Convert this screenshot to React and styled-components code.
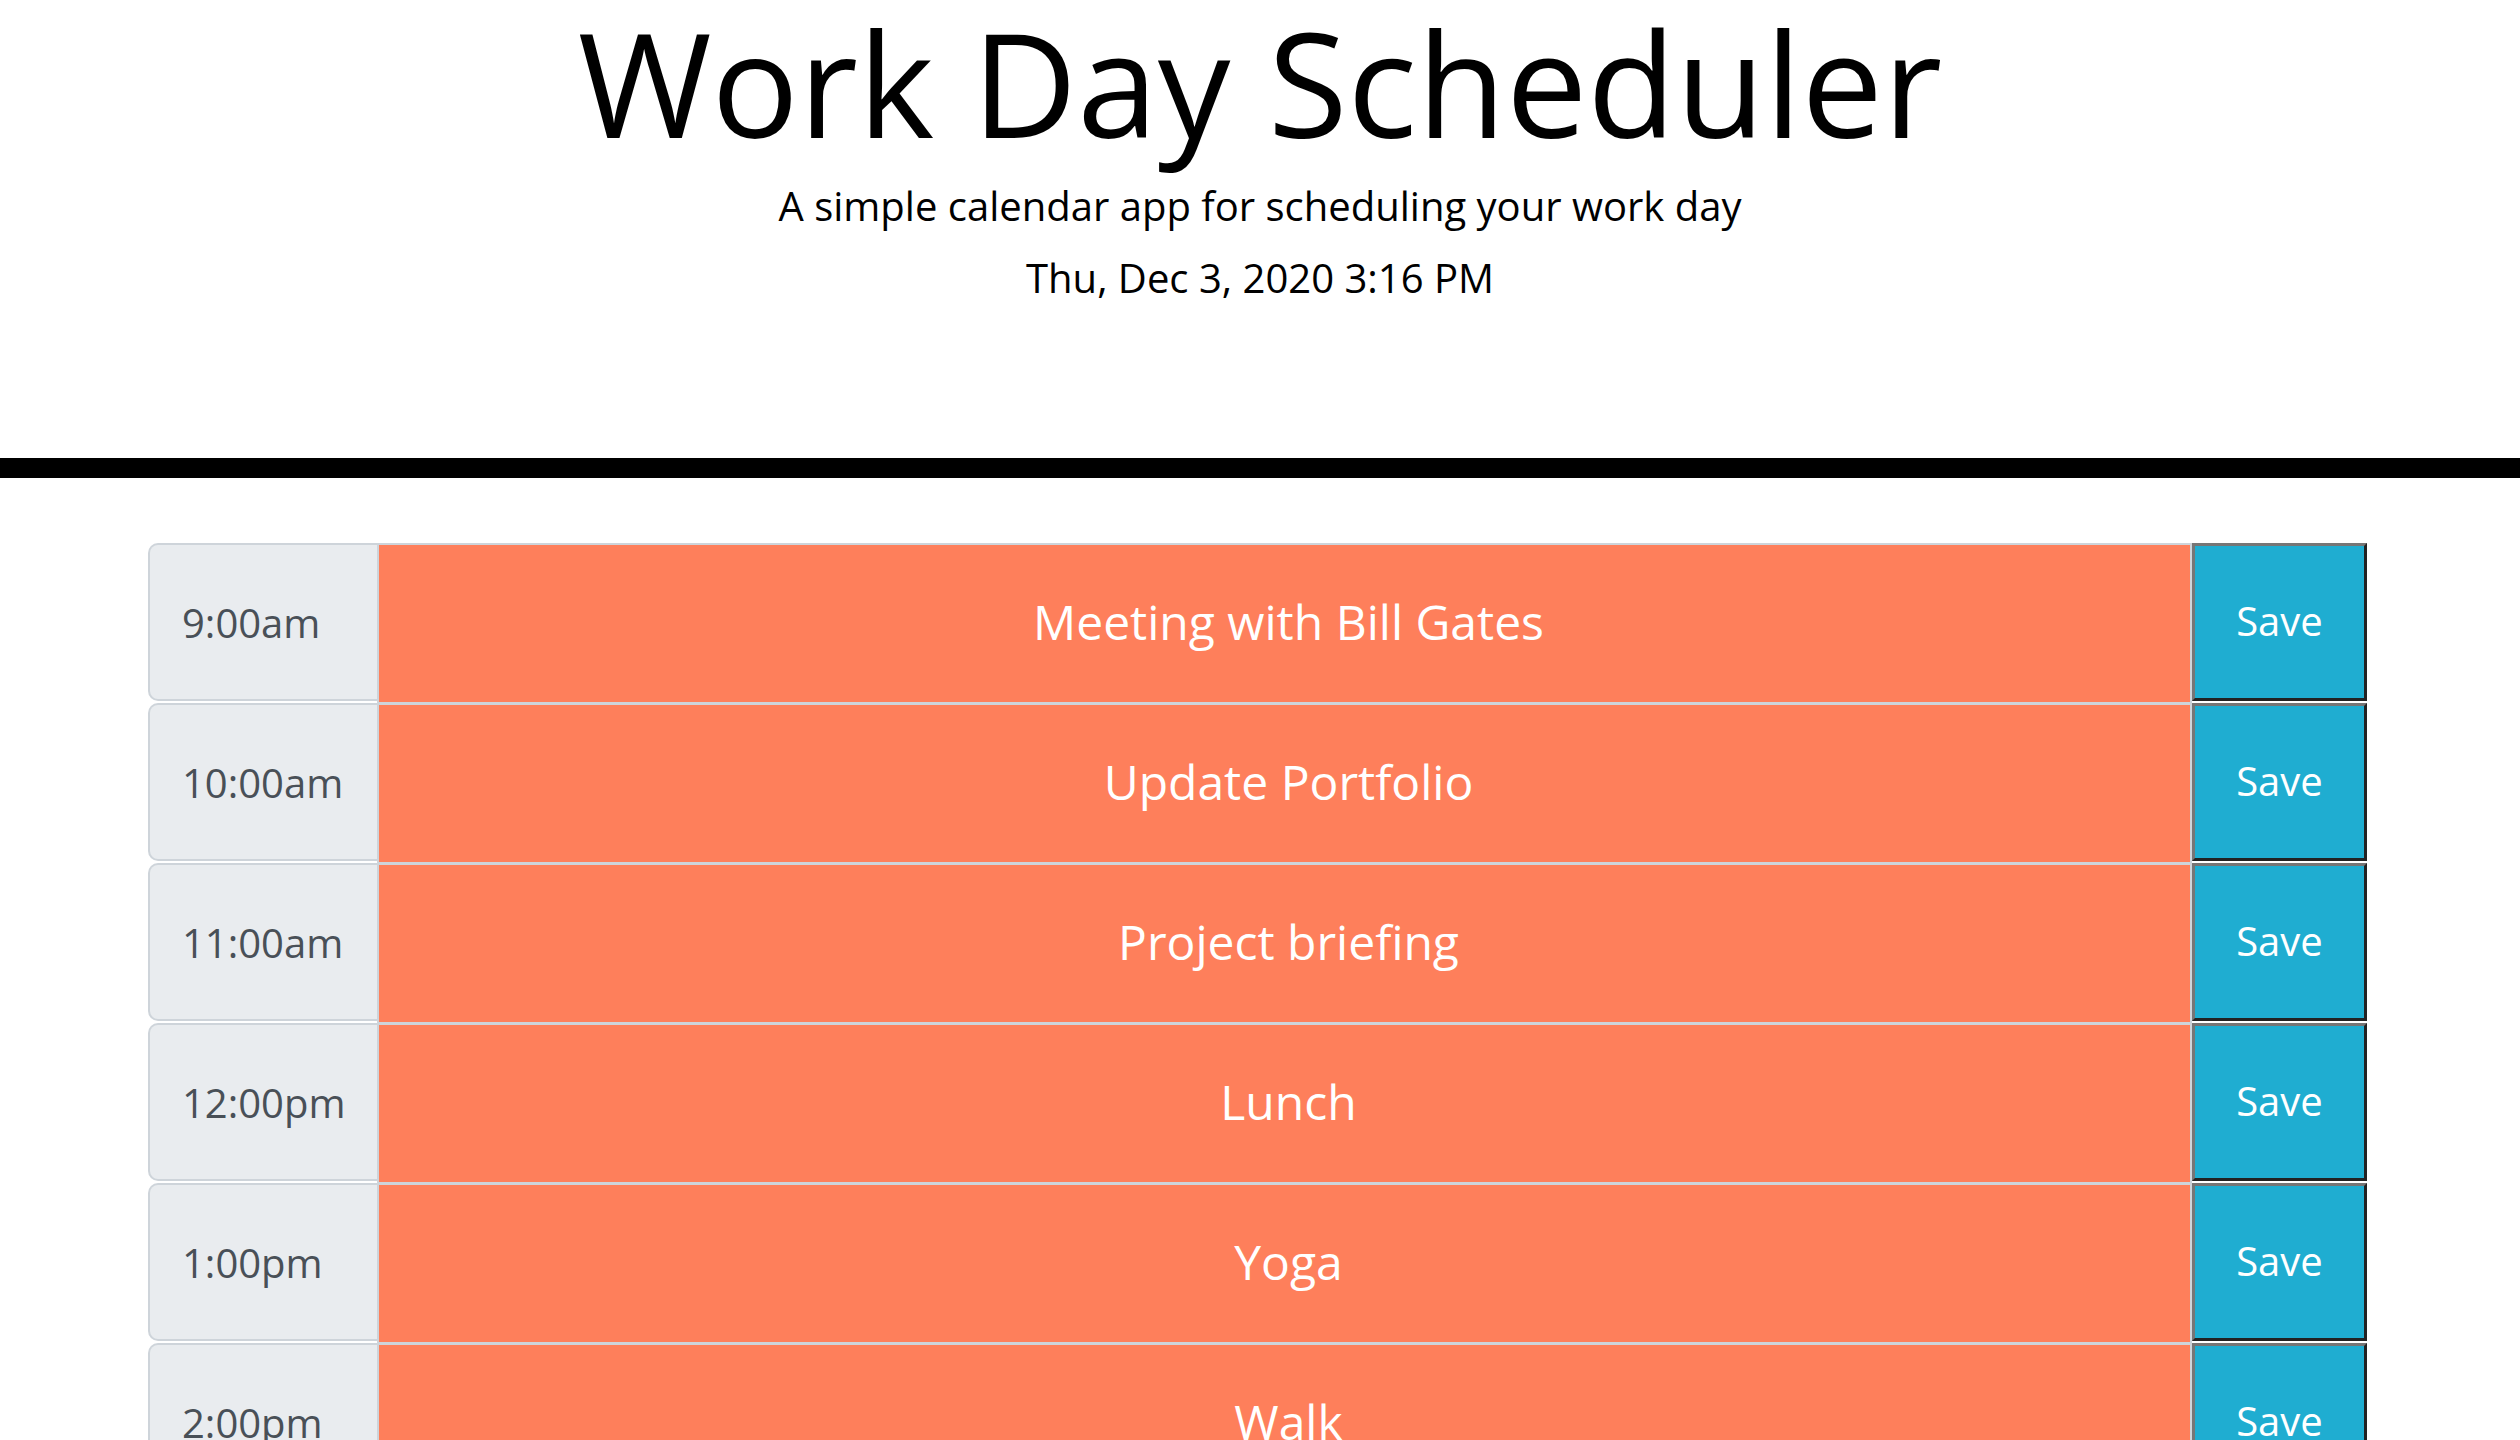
import React from "react";
import styled, { createGlobalStyle } from "styled-components";

const GlobalStyle = createGlobalStyle`
  body {
    margin: 0;
    background: #fff;
    font-family: "Open Sans", "Liberation Sans", sans-serif;
    color: #000;
  }
`;

const Header = styled.header`
  height: 478px;
  box-sizing: border-box;
  border-bottom: 20px solid #000;
  text-align: center;
  padding-top: 2px;
`;

const Title = styled.h1`
  margin: 0;
  font-size: 145px;
  font-weight: 400;
  line-height: 1.1;
`;

const Lead = styled.p`
  margin: 14px 0 0;
  font-size: 40px;
  line-height: 1.5;
`;

const Clock = styled.p`
  margin: 12px 0 0;
  font-size: 40px;
  line-height: 1.5;
`;

const Container = styled.main`
  width: 2219px;
  margin: 65px 0 0 148px;
`;

const Row = styled.div`
  display: flex;
  height: 160px;
`;

const Hour = styled.div`
  width: 229px;
  height: 158px;
  box-sizing: border-box;
  display: flex;
  align-items: center;
  padding: 0 32px;
  background: #e9ecef;
  color: #495057;
  font-size: 40px;
  border: 2.5px solid #ced4da;
  border-right: none;
  border-radius: 10px 0 0 10px;
`;

const Task = styled.textarea`
  flex: 1;
  height: 160px;
  box-sizing: border-box;
  margin: 0;
  padding: 41px 16px 0 24px;
  border: 2.5px solid #ced4da;
  border-bottom-width: 1px;
  background: ${(p) => p.$bg};
  color: #fff;
  font-family: "Open Sans", "Liberation Sans", sans-serif;
  font-size: 48px;
  line-height: 1.5;
  text-align: center;
  resize: none;
  overflow: hidden;
  outline: none;
`;

const SaveBtn = styled.button`
  width: 175px;
  height: 158px;
  box-sizing: border-box;
  margin: 0;
  padding: 0 0 4px;
  background: #1fadd1;
  color: #fff;
  font-family: "Open Sans", "Liberation Sans", sans-serif;
  font-size: 40px;
  border-style: solid;
  border-width: 3.5px;
  border-color: #767676 #222 #222 #767676;
  cursor: pointer;
`;

const phaseColors = {
  past: "#d3d3d3",
  present: "#fe7f5b",
  future: "#fe7f5b",
};

const hours = [
  { label: "9:00am", text: "Meeting with Bill Gates" },
  { label: "10:00am", text: "Update Portfolio" },
  { label: "11:00am", text: "Project briefing" },
  { label: "12:00pm", text: "Lunch" },
  { label: "1:00pm", text: "Yoga" },
  { label: "2:00pm", text: "Walk" },
  { label: "3:00pm", text: "" },
  { label: "4:00pm", text: "" },
  { label: "5:00pm", text: "" },
];

const TimeBlock = ({ label, text }) => (
  <Row>
    <Hour>{label}</Hour>
    <Task $bg={phaseColors.present} defaultValue={text} />
    <SaveBtn>Save</SaveBtn>
  </Row>
);

const App = () => (
  <>
    <GlobalStyle />
    <Header>
      <Title>Work Day Scheduler</Title>
      <Lead>A simple calendar app for scheduling your work day</Lead>
      <Clock>Thu, Dec 3, 2020 3:16 PM</Clock>
    </Header>
    <Container>
      {hours.map((h) => (
        <TimeBlock key={h.label} label={h.label} text={h.text} />
      ))}
    </Container>
  </>
);

export default App;
